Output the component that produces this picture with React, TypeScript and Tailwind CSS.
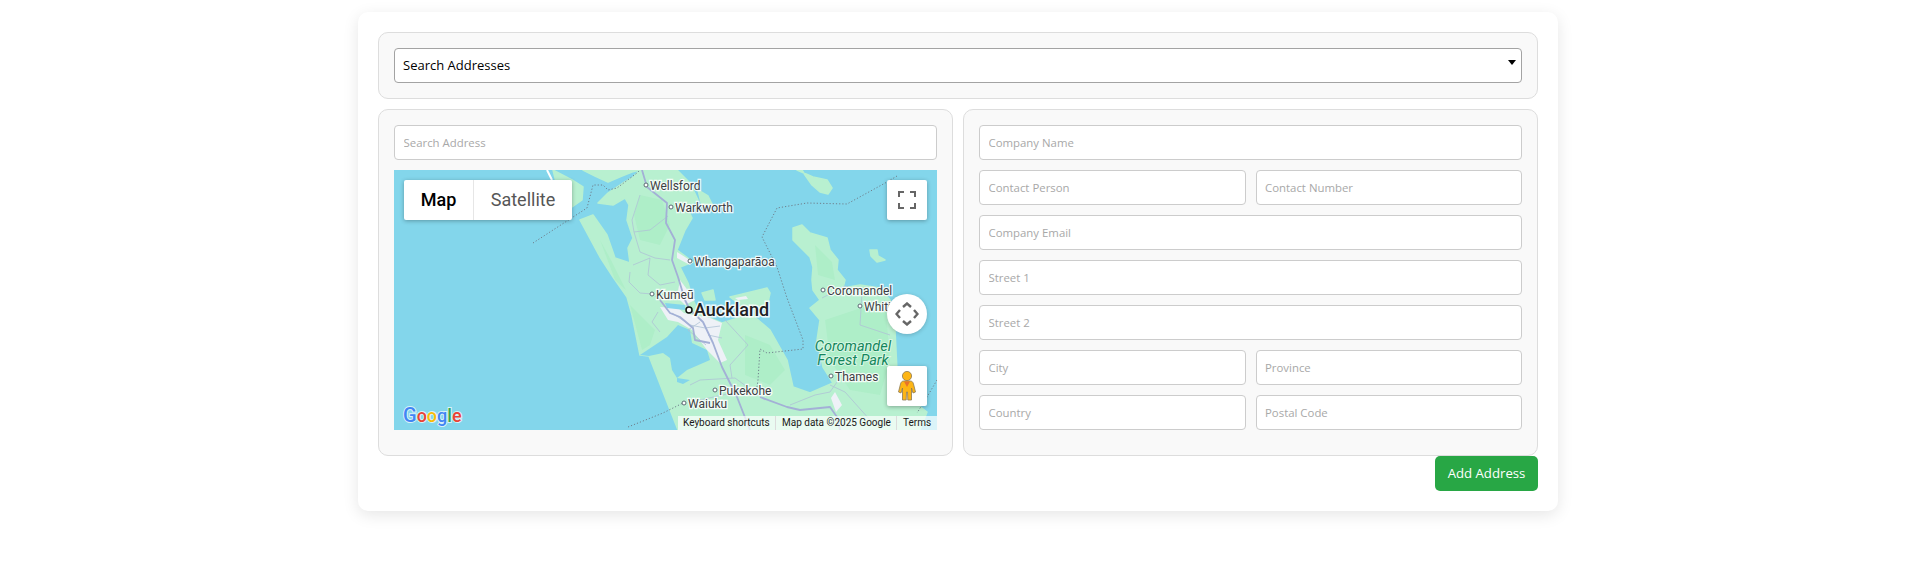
const pageFont = "font-['Open_Sans',sans-serif]";

const water = "#83d6eb";
const land = "#b8f0d0";
const forest = "#aeeec8";
const urban = "#eef1f7";

function Field({ placeholder }: { placeholder: string }) {
  return (
    <input
      placeholder={placeholder}
      className={`h-[35px] w-full min-w-0 rounded-[4px] border border-[#ccc] bg-white px-[8.5px] text-[11.4px] outline-none placeholder:text-[#a8a8a8] ${pageFont}`}
    />
  );
}

function City({ x, y, label, dx = 4 }: { x: number; y: number; label: string; dx?: number }) {
  return (
    <g>
      <circle cx={x} cy={y} r="2" fill="#fff" stroke="#5b6b73" strokeWidth="1" />
      <text
        x={x + dx}
        y={y + 4.5}
        fontSize="12"
        fill="#3c4043"
        stroke="#fff"
        strokeWidth="2.5"
        strokeOpacity="0.85"
        paintOrder="stroke"
        fontFamily="Roboto, sans-serif"
      >
        {label}
      </text>
    </g>
  );
}

function MapArt() {
  return (
    <svg viewBox="394 170 543 260" className="block h-[260px] w-[543px]">
      <rect x="394" y="170" width="543" height="260" fill={water} />

      {/* land */}
      <g fill={land} stroke={land} strokeWidth="1.5" strokeLinejoin="round">
        <polygon points="580,220 600,257 613,277 627,297 632,315 640,355 649,356 678,430 920,430 927,412 905,395 897,370 895,330 890,300 880,288 860,285 843,288 845,280 837,270 838,260 830,250 827,238 810,233 802,225 793,228 793,240 810,257 813,267 812,280 813,290 820,300 810,308 820,320 817,340 823,367 833,383 810,393 793,387 787,360 770,330 750,313 735,319 722,323 710,318 697,308 693,300 688,283 680,267 693,262 677,250 685,230 692,218 687,207 698,200 690,183 677,170 640,170 637,173 632,178 623,183 608,193 598,203 613,205 625,198 629,205 627,220 633,238 628,248 630,263 615,258 607,235 593,215" />
        <polygon points="553,170 572,180 583,187 582,200 572,207 560,200 556,182" />
        <polygon points="583,170 595,176 608,182 622,176 632,172 640,170" />
        <polygon points="797,170 813,177 827,180 832,188 828,194 820,192 812,185 805,175 802,170" />
        <polygon points="870,250 877,250 878,256 885,260 877,262 871,256" />
        <polygon points="702,293 713,290 715,300 705,300" />
        <polygon points="730,297 767,288 770,293 767,307 747,310" />
        <polygon points="698,190 708,196 712,204 702,206" />
      </g>
      <path d="M547 170 L552 180" stroke="#fff" strokeWidth="2" fill="none" />

      {/* forest */}
      <g fill={forest}>
        <polygon points="640,195 662,200 670,225 660,245 640,240 634,215" />
        <polygon points="600,240 612,262 626,290 615,280" />
        <polygon points="630,305 655,330 650,345 642,350" />
        <polygon points="745,335 770,345 785,370 770,385 745,375" />
        <polygon points="825,320 885,300 890,360 880,395 850,390 830,360" />
        <polygon points="815,245 832,262 835,280 818,275" />
      </g>

      {/* harbours */}
      <polygon fill={water} points="640,355 667,337 678,325 690,330 692,343 707,350 710,360 687,370 677,378 672,370 670,358 663,353 649,356" />
      <polygon fill={water} points="677,378 690,380 683,384 677,382" />

      {/* urban */}
      <polygon fill={urban} points="660,307 678,308 684,313 710,318 722,323 718,340 727,360 720,363 707,350 692,330 678,322 668,320" />
      <polygon fill={urban} points="680,280 695,300 685,305 677,297" />
      <polygon fill={urban} points="677,252 693,262 690,265 677,258" />
      <polygon fill={urban} points="735,298 746,296 748,299 738,300" />
      <polygon fill={urban} points="835,392 842,405 836,412 831,398" />
      <polygon fill={water} points="665,303 685,305 685,310 667,308" />

      {/* minor roads */}
      <g fill="none" stroke="#afc3d6" strokeWidth="0.8">
        <path d="M640 195 L632 220 L634 232 L640 252 L655 258 L670 260" />
        <path d="M634 232 L650 230 L668 216" />
        <path d="M633 265 L650 258 L648 275 L660 285 L675 282" />
        <path d="M630 272 L629 282 L640 293 L652 294" />
        <path d="M655 296 L660 300" />
        <path d="M658 312 L652 322 L660 332" />
        <path d="M725 320 L748 345 L730 365 L732 378" />
        <path d="M690 385 L700 380 L735 378 L765 400" />
        <path d="M790 405 L815 395 L830 392 L837 382" />
        <path d="M822 298 L845 286 L862 293 L860 325 L890 335" />
        <path d="M830 385 L845 392 L870 420" />
        <path d="M700 400 L745 390" />
        <path d="M672 313 L690 325 L705 328 L720 326" />
        <path d="M700 322 L688 330 L706 345" />
        <path d="M708 335 L722 338" />
      </g>

      {/* motorways */}
      <g fill="none" stroke="#a3b0d6" strokeWidth="1.8" strokeLinejoin="round">
        <path d="M642 170 L647 187 L667 203 L666 223 L675 240 L672 260 L678 277 L685 300 L690 310 L703 322 L713 343 L722 367 L737 397 L750 430" />
        <path d="M660 300 L670 313 L680 317 L693 328 L695 340 L710 343" />
        <path d="M760 397 L787 407 L800 410 L830 407 L837 417 L840 430" />
      </g>

      {/* boundaries */}
      <g fill="none" stroke="#6f7f8c" strokeWidth="1" strokeDasharray="1.2 2">
        <path d="M533 243 L587 208 L593 185 L603 185 L608 190 L617 188 L637 173 L640 170" />
        <path d="M897 176 L887 182 L847 204 L807 203 L777 208 L762 237 L777 267 L787 298 L803 340 L803 349 L767 353 L760 349 L758 380 L757 387" />
        <path d="M628 427 L663 413 L683 403" />
        <path d="M937 380 L927 397 L917 413" />
      </g>

      {/* labels */}
      <City x={646} y={185} label="Wellsford" />
      <City x={671} y={207} label="Warkworth" />
      <City x={690} y={261} label="Whangaparāoa" />
      <City x={652} y={294} label="Kumeū" />
      <City x={823} y={290} label="Coromandel" />
      <City x={860} y={306} label="Whitianga" />
      <City x={831} y={376} label="Thames" />
      <City x={715} y={390} label="Pukekohe" />
      <City x={684} y={403} label="Waiuku" />
      <circle cx="689" cy="310" r="3" fill="#fff" stroke="#111" strokeWidth="1.5" />
      <text
        x="694"
        y="316"
        fontSize="18"
        fontWeight="500"
        fill="#202124"
        stroke="#fff"
        strokeWidth="3"
        strokeOpacity="0.85"
        paintOrder="stroke"
        fontFamily="Roboto, sans-serif"
      >
        Auckland
      </text>
      <g
        fontSize="14.5"
        fontStyle="italic"
        fill="#14865c"
        stroke="#fff"
        strokeWidth="2"
        strokeOpacity="0.5"
        paintOrder="stroke"
        textAnchor="middle"
        fontFamily="Roboto, sans-serif"
      >
        <text x="853" y="351">Coromandel</text>
        <text x="853" y="365">Forest Park</text>
      </g>

      {/* google mark */}
      <text
        x="403"
        y="422"
        fontSize="18"
        fontWeight="500"
        stroke="#fff"
        strokeOpacity="0.7"
        strokeWidth="2"
        paintOrder="stroke"
        fontFamily="Roboto, sans-serif"
      >
        <tspan fill="#4285f4" fontSize="20">G</tspan>
        <tspan fill="#ea4335">o</tspan>
        <tspan fill="#fbbc05">o</tspan>
        <tspan fill="#4285f4">g</tspan>
        <tspan fill="#34a853">l</tspan>
        <tspan fill="#ea4335">e</tspan>
      </text>
    </svg>
  );
}

function FullscreenIcon() {
  return (
    <svg width="18" height="18" viewBox="0 0 18 18" fill="none" stroke="#666" strokeWidth="2">
      <path d="M1 6V1H6M12 1H17V6M17 12V17H12M6 17H1V12" />
    </svg>
  );
}

function RotateIcon() {
  return (
    <svg width="24" height="24" viewBox="0 0 24 24" fill="none" stroke="#666" strokeWidth="2.4">
      <path d="M8 5L12 1.5L16 5M8 19L12 22.5L16 19M5 8L1.5 12L5 16M19 8L22.5 12L19 16" />
    </svg>
  );
}

function Pegman() {
  return (
    <svg width="18" height="30" viewBox="0 0 18 30">
      <path
        d="M6 10 H12 C14 10 15 11 15.5 13 L17.5 21 L15 22 L13.5 17 L13.5 29 L9.8 29 L9.5 21 L8.5 21 L8.2 29 L4.5 29 L4.5 17 L3 22 L0.5 21 L2.5 13 C3 11 4 10 6 10 Z"
        fill="#fdb515"
        stroke="#8c7a55"
        strokeWidth="0.8"
      />
      <circle cx="9" cy="5" r="4.6" fill="#fdb515" stroke="#8c7a55" strokeWidth="0.8" />
      <path d="M6 10.5 L9 16 L12 10.5 Z" fill="#e8732a" />
    </svg>
  );
}

function MapBox() {
  return (
    <div className="relative mt-[10px] h-[260px] w-full overflow-hidden">
      <MapArt />
      <div className="absolute left-[10px] top-[10px] flex h-[40px] overflow-hidden rounded-[2px] bg-white text-[18px] font-['Roboto',sans-serif] shadow-[0_1px_4px_rgba(0,0,0,0.3)]">
        <div className="flex w-[70px] items-center justify-center border-r border-[#e6e6e6] pb-[1px] font-medium text-black">Map</div>
        <div className="flex w-[98px] items-center justify-center pb-[1px] text-[#565656]">Satellite</div>
      </div>
      <div className="absolute right-[10px] top-[10px] flex h-[40px] w-[40px] items-center justify-center rounded-[2px] bg-white shadow-[0_1px_4px_rgba(0,0,0,0.3)]">
        <FullscreenIcon />
      </div>
      <div className="absolute right-[10px] top-[124px] flex h-[40px] w-[40px] items-center justify-center rounded-full bg-white shadow-[0_1px_4px_rgba(0,0,0,0.2)]">
        <RotateIcon />
      </div>
      <div className="absolute right-[10px] top-[196px] flex h-[40px] w-[40px] items-center justify-center rounded-[2px] bg-white shadow-[0_1px_4px_rgba(0,0,0,0.3)]">
        <Pegman />
      </div>
      <div className="absolute bottom-0 right-0 flex h-[14px] w-[259px] items-center bg-white/70 text-[10px] leading-[14px] text-[#1a1a1a] font-['Roboto',sans-serif]">
        <span className="w-[98px] border-r border-[#dcdcdc] pl-[5px]">Keyboard shortcuts</span>
        <span className="w-[121px] border-r border-[#dcdcdc] pl-[6px]">Map data ©2025 Google</span>
        <span className="pl-[6px]">Terms</span>
      </div>
    </div>
  );
}

export default function App() {
  return (
    <div className={`min-h-[569px] bg-white pt-[12px] ${pageFont}`}>
      <div className="ml-[358px] w-[1200px] rounded-[10px] bg-white p-5 shadow-[0_4px_16px_rgba(0,0,0,0.1)]">
        <div className="mb-[10px] rounded-[10px] border border-[#ddd] bg-[#f9f9f9] p-[15px]">
          <div className="relative">
            <select className="h-[35px] w-full appearance-none rounded-[4px] border border-[#a3a3a3] bg-white pl-2 text-[13px] text-black outline-none">
              <option>Search Addresses</option>
            </select>
            <span className="absolute right-[6px] top-[12px] h-0 w-0 border-x-[4px] border-t-[5px] border-x-transparent border-t-black" />
          </div>
        </div>

        <div className="grid grid-cols-2 gap-[10px]">
          <div className="rounded-[10px] border border-[#ddd] bg-[#f9f9f9] p-[15px] pb-[25px]">
            <Field placeholder="Search Address" />
            <MapBox />
          </div>
          <div className="flex flex-col gap-[10px] rounded-[10px] border border-[#ddd] bg-[#f9f9f9] p-[15px] pb-[25px]">
            <Field placeholder="Company Name" />
            <div className="grid grid-cols-2 gap-[10px]">
              <Field placeholder="Contact Person" />
              <Field placeholder="Contact Number" />
            </div>
            <Field placeholder="Company Email" />
            <Field placeholder="Street 1" />
            <Field placeholder="Street 2" />
            <div className="grid grid-cols-2 gap-[10px]">
              <Field placeholder="City" />
              <Field placeholder="Province" />
            </div>
            <div className="grid grid-cols-2 gap-[10px]">
              <Field placeholder="Country" />
              <Field placeholder="Postal Code" />
            </div>
          </div>
        </div>

        <div className="flex justify-end">
          <button className="h-[35px] w-[103px] rounded-[5px] bg-[#28a745] text-[13.2px] text-white">Add Address</button>
        </div>
      </div>
    </div>
  );
}
